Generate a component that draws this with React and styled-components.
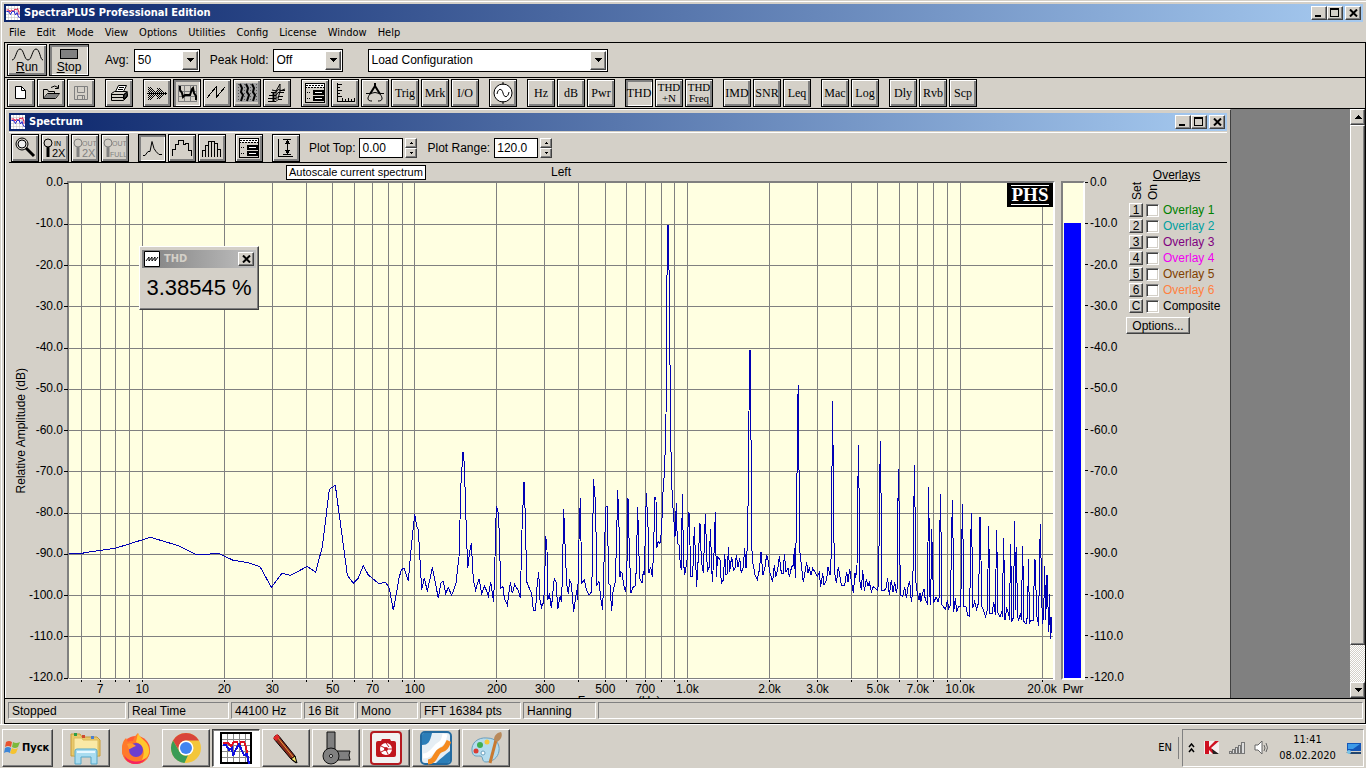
import React from 'react';
import styled, { createGlobalStyle, css } from 'styled-components';

const FACE = '#d4d0c8';
const SHADOW = '#808080';
const DARK = '#404040';
const PLOT = '#ffffe1';
const UI = '"DejaVu Sans Condensed", "Noto Sans", sans-serif';
const ARIAL = '"Liberation Sans", Arial, sans-serif';
const SERIF = '"Liberation Serif", "Times New Roman", serif';

const GlobalStyle = createGlobalStyle`
  * { box-sizing: border-box; }
  body { margin: 0; background: ${FACE}; font: 12px/14px ${ARIAL}; color: #000; }
  button, input, select { font: inherit; color: inherit; margin: 0; padding: 0; border-radius: 0; }
  svg { display: block; flex: none; }
`;

const raised = css`
  background: ${FACE};
  border: 1px solid;
  border-color: #fff ${DARK} ${DARK} #fff;
  box-shadow: inset -1px -1px 0 ${SHADOW};
`;

const Screen = styled.div`
  display: flex;
  flex-direction: column;
  height: 100vh;
  overflow: hidden;
`;

const AppWindow = styled.div`
  flex: 1;
  min-height: 0;
  display: flex;
  flex-direction: column;
  padding: 2px 0 0 2px;
  border-top: 1px solid #fff;
  border-left: 1px solid #fff;
  margin: 1px 0 0 1px;
`;

const TitleBar = styled.header`
  display: flex;
  align-items: center;
  gap: 4px;
  height: 18px;
  padding: 0 2px;
  margin-right: ${p => (p.$main ? '3px' : '0')};
  background: ${p => (p.$idle ? `linear-gradient(90deg, #808080, #c0c0c0)` : 'linear-gradient(90deg, #0a246a, #a6caf0)')};
  color: ${p => (p.$idle ? FACE : '#fff')};
`;

const TitleText = styled.h1`
  flex: 1;
  margin: 0;
  font: bold 11px/16px ${UI};
`;

const Captions = styled.div`
  display: flex;
  button:last-child { margin-left: ${p => (p.$single ? '0' : '2px')}; }
`;

const CaptionButton = styled.button`
  ${raised}
  width: 16px;
  height: 14px;
  display: flex;
  align-items: center;
  justify-content: center;
  color: #000 !important;
`;

const MenuBar = styled.nav`
  display: flex;
  gap: 11px;
  height: 20px;
  padding: 0 5px;
  font: 11px/21px ${UI};
  a { color: inherit; text-decoration: none; }
`;

const Frame = styled.div`
  flex: 1;
  min-height: 0;
  display: flex;
  flex-direction: column;
  border: 1px solid #000;
`;

const Toolbar = styled.div`
  display: flex;
  align-items: center;
  gap: ${p => p.$gap || 10}px;
  height: ${p => p.$height}px;
  padding: 0 2px;
  border-bottom: 1px solid #000;
`;

const Group = styled.div`
  display: flex;
  gap: 2px;
`;

const ToolButton = styled.button`
  display: flex;
  flex-direction: column;
  align-items: center;
  justify-content: center;
  width: ${p => (p.$wide ? 40 : 28)}px;
  height: ${p => (p.$wide ? 32 : 28)}px;
  overflow: hidden;
  white-space: pre;
  text-align: center;
  font: ${p => (p.$wide ? `12px/13px ${ARIAL}` : p.$small ? `11px/11px ${SERIF}` : `12px/14px ${SERIF}`)} !important;
  background: ${FACE};
  color: ${p => (p.$off ? SHADOW : '#000')} !important;
  border: 1px solid #000;
  box-shadow: ${p => (p.$down
    ? `inset 2px 2px 0 ${SHADOW}, inset -1px -1px 0 #fff`
    : `inset 1px 1px 0 #fff, inset -2px -2px 0 ${SHADOW}`)};
`;

const Field = styled.label`
  display: flex;
  align-items: center;
  gap: ${p => p.$gap || 4}px;
  white-space: nowrap;
`;

const Combo = styled.span`
  position: relative;
  display: block;
  width: ${p => p.$width}px;
  height: 23px;
  select {
    appearance: none;
    width: 100%;
    height: 100%;
    padding: 0 22px 0 3px;
    border: 1px solid #000;
    background: #fff;
  }
  i {
    ${raised}
    position: absolute;
    top: 2px;
    right: 2px;
    bottom: 2px;
    width: 16px;
    display: flex;
    align-items: center;
    justify-content: center;
    pointer-events: none;
  }
`;

const NumberBox = styled.input`
  width: 44px;
  height: 20px;
  padding: 0 2px !important;
  border: 1px solid #000;
  background: #fff;
`;

const Spinner = styled.span`
  display: flex;
  flex-direction: column;
  margin-right: 8px;
  button {
    ${raised}
    display: flex;
    align-items: center;
    justify-content: center;
    width: 12px;
    height: 10px;
  }
`;

const Workspace = styled.div`
  flex: 1;
  min-height: 0;
  display: flex;
  background: ${SHADOW};
  overflow: hidden;
`;

const Child = styled.section`
  flex: 1;
  min-width: 0;
  height: calc(100% + 24px);
  display: flex;
  flex-direction: column;
  padding: 3px 3px 2px;
  margin-right: 119px;
  background: ${FACE};
  border: 1px solid;
  border-color: #fff ${DARK} ${DARK} #fff;
`;

const ChildBar = styled(Toolbar)`
  border-top: 1px solid #fff;
  margin-top: 1px;
`;

const Body = styled.div`
  flex: 1;
  min-height: 0;
  display: flex;
`;

const ChartGrid = styled.div`
  flex: 1;
  min-width: 0;
  display: grid;
  grid-template-columns: 19px 36px 3px minmax(0, 1fr) 6px 24px 41px;
  grid-template-rows: 18px minmax(0, 1fr) 39px;
`;

const ChannelName = styled.div`
  grid-column: 4;
  text-align: center;
  line-height: 18px;
`;

const AxisTitle = styled.div`
  grid-row: 2;
  grid-column: 1;
  align-self: center;
  justify-self: end;
  writing-mode: vertical-rl;
  rotate: 180deg;
  white-space: nowrap;
`;

const Scale = styled.div`
  grid-row: 2;
  grid-column: ${p => p.$column};
  display: flex;
  flex-direction: column;
  justify-content: space-between;
  align-items: ${p => (p.$left ? 'flex-start' : 'flex-end')};
  margin: -6px 0 -4px;
  padding: 0 1px 0 0;
  span { display: flex; align-items: center; gap: 2px; }
  span::before {
    content: '';
    display: ${p => (p.$left ? 'block' : 'none')};
    width: 3px;
    height: 1px;
    background: #000;
  }
`;

const PlotFrame = styled.div`
  grid-row: 2;
  grid-column: ${p => p.$column};
  position: relative;
  min-height: 0;
  background: ${PLOT};
  border: 2px solid;
  border-color: ${SHADOW} #fff #fff ${SHADOW};
  svg.plot { width: 100%; height: 100%; overflow: visible; }
`;

const Level = styled.div`
  height: 100%;
  padding: 40px 2px 0 1px;
  &::before { content: ''; display: block; height: 100%; background: #0000ff; }
`;

const FreqAxis = styled.div`
  grid-row: 3;
  grid-column: 4;
  padding: 0 2px;
  svg { width: 100%; height: 36px; overflow: visible; font: 12px ${ARIAL}; }
`;

const MeterName = styled.div`
  grid-row: 3;
  grid-column: 6;
  padding-top: 2px;
  text-align: center;
`;

const Badge = styled.div`
  position: absolute;
  top: 0;
  right: 0;
  width: 46px;
  padding: 2px 4px;
  background: #000;
  color: #fff;
  text-align: center;
  font: bold 19px/18px ${SERIF};
  span { display: block; border: solid #fff; border-width: 1px 0; }
`;

const Floating = styled.div`
  ${raised}
  position: absolute;
  left: 70px;
  top: 63px;
  width: 120px;
  height: 64px;
  padding: 3px 2px;
`;

const Reading = styled.div`
  text-align: center;
  white-space: nowrap;
  font: 22px/40px ${ARIAL};
`;

const Tip = styled.div`
  position: absolute;
  top: 31px;
  left: 14px;
  z-index: 2;
  padding: 0 2px;
  border: 1px solid #000;
  background: #fff;
  font: 11px/13px ${ARIAL};
  white-space: nowrap;
`;

const TipAnchor = styled.div`
  position: relative;
`;

const Overlays = styled.aside`
  display: flex;
  flex-direction: column;
  width: 101px;
  padding-top: 5px;
  white-space: nowrap;
`;

const OverlayHead = styled.a`
  align-self: center;
  color: inherit;
  text-decoration: underline;
`;

const Uprights = styled.div`
  display: flex;
  align-items: flex-end;
  gap: 2px;
  height: 18px;
  padding-left: 4px;
  margin-bottom: 2px;
  span { writing-mode: vertical-rl; rotate: 180deg; line-height: 14px; }
`;

const OverlayRow = styled.div`
  display: flex;
  align-items: center;
  height: 16px;
  padding-left: 3px;
  color: ${p => p.$color};
`;

const SetButton = styled.button`
  ${raised}
  width: 14px;
  height: 14px;
  line-height: 11px !important;
  color: #000 !important;
`;

const Tick = styled.input.attrs({ type: 'checkbox' })`
  appearance: none;
  width: 13px;
  height: 13px;
  margin: 0 3px !important;
  background: #fff;
  border: 1px solid;
  border-color: ${SHADOW} #fff #fff ${SHADOW};
  box-shadow: inset 1px 1px 0 ${DARK}, inset -1px -1px 0 ${FACE};
`;

const Options = styled.button`
  ${raised}
  width: 64px;
  height: 17px;
  line-height: 14px !important;
  margin: 3px 0 0 !important;
`;

const Scrollbar = styled.div`
  display: flex;
  flex-direction: column;
  width: 15px;
  background: repeating-conic-gradient(#fff 0 25%, ${FACE} 0 50%) 0 0 / 2px 2px;
  button {
    ${raised}
    display: flex;
    align-items: center;
    justify-content: center;
    height: 16px;
    width: 15px;
  }
`;

const Thumb = styled.div`
  ${raised}
  flex: 520;
`;

const Track = styled.div`
  flex: 37;
`;

const StatusBar = styled.footer`
  display: flex;
  gap: 2px;
  height: 25px;
  padding: 3px 2px 4px 3px;
  border-top: 1px solid #000;
`;

const Panel = styled.div`
  ${p => (p.$width ? `width: ${p.$width}px;` : 'flex: 1;')}
  padding-left: 3px;
  border: 1px solid;
  border-color: ${SHADOW} #fff #fff ${SHADOW};
  line-height: 16px;
`;

const Taskbar = styled.div`
  display: flex;
  align-items: center;
  height: 44px;
  padding: 2px 2px 0;
  border-top: 1px solid #fff;
`;

const Start = styled.button`
  ${raised}
  display: flex;
  align-items: center;
  gap: 1px;
  width: 51px;
  height: 38px;
  padding-left: 1px !important;
  margin-right: 9px !important;
  font: bold 11px/14px ${UI} !important;
`;

const TaskList = styled.div`
  flex: 1;
  display: flex;
  gap: 2px;
`;

const Task = styled.button`
  ${raised}
  display: flex;
  align-items: center;
  justify-content: center;
  width: 48px;
  height: 38px;
  ${p => p.$flat && 'border-color: transparent; box-shadow: none;'}
  ${p => p.$active && `background: #fff; border-color: ${DARK} #fff #fff ${DARK}; box-shadow: inset 1px 1px 0 ${SHADOW};`}
`;

const Language = styled.span`
  padding-right: 6px;
  margin-right: 3px;
  border-right: 1px solid ${SHADOW};
  font: 11px/22px ${UI};
`;

const Tray = styled.div`
  display: flex;
  align-items: center;
  gap: 9px;
  width: 182px;
  height: 38px;
  padding: 0 2px 0 5px;
  border: 1px solid;
  border-color: ${SHADOW} #fff #fff ${SHADOW};
`;

const Clock = styled.time`
  flex: 1;
  display: flex;
  flex-direction: column;
  align-items: center;
  min-width: 0;
  font: 11px/16px ${UI};
`;

/* ---- spectrum data: three units to a pixel of the nominal plot ---- */

const SEGMENTS = [
  [-27, 711, '24,400 66,400 80,397 165,385 245,360 272,352 355,377 410,405 475,400 520,421 565,428 600,440 634,502 666,460 692,466 742,439 767,457 787,380 808,208 826,196 862,466 880,490 895,474 910,437 925,465 955,490 978,488 988,505 1000,571 1018,470'],
  [933, 771, '65,388 72,385 85,423 93,330 104,223 110,258 115,270 125,450 133,413 142,455 157,382 175,475 183,428 190,424 197,460 205,443 215,466 228,430 237,350 240,240 243,130 249,35 253,70 257,210 263,385 269,335 274,310 280,420 287,450 297,416 305,460 314,438 325,467 332,425 341,487 345,350 349,197 354,215 358,280 362,445 369,440 373,475 382,495 391,427 397,460 404,434 415,452 421,475 426,270 432,125 436,230 440,425 448,445 455,460 460,511 467,511 470,450 476,395 480,480 485,502 491,485 494,430 497,287 501,330 503,480 508,460 514,505 523,413 529,430 533,508 541,467 544,487 547,420 551,208 556,335 560,430 565,463 569,422 574,430 581,515 590,450 593,480 597,300 601,175 605,430 613,420 618,445 627,466 635,455 638,330 640,118 647,190 650,435 657,425 663,480 668,510 673,330 678,200 682,200 686,430 690,435 695,513 699,455 705,430 709,330 713,150 717,260 720,410 722,395 727,400 730,430 736,455 740,430 744,175 748,330 753,460 760,440 767,437 770,330 773,202 779,415 786,430 790,395 793,400 799,160 804,260 807,400 812,380 817,412 821,330 824,170 828,180 830,325 834,305 840,310'],
  [1713, 51, '65,990 68,890 74,805 78,650 80,310 83,75 85,75 88,275 91,600 94,830 98,910 103,980 105,1010 109,910 112,1030 117,1035 121,1095 124,1110 127,882 131,1090 134,1125 142,1075 145,937 148,940 152,1130 158,1130 163,980 166,1060 170,1160 175,1070 180,970 184,1080 190,1120 196,943 202,1115 208,1100 211,988 217,1147 222,1060 226,935 229,1130 233,1070 240,1080 244,1150 250,1140 254,1062 258,1125 262,1120 265,1042 269,1115 275,1070 280,1110 285,1105 289,1065 294,1100 299,1075 304,1120 310,1100 314,1045 318,1105 323,1020 326,730 329,450 331,450 333,720 335,1035 338,1085 345,1125 352,1138 358,1110 363,1057 369,1125 375,1100 380,1065 385,1085 389,1115 398,1145 403,1095 407,1130 413,1110 418,1068 424,1120 430,1120 433,1062 438,1115 444,1105 448,1130 455,1100 460,1095 463,1045 466,1135 470,930 473,615 475,555 477,810 480,1060 484,1095 490,1147 500,1085 504,1120 508,1105 513,1125 518,1105 524,1115 532,1130 538,1118 542,1160 548,1120 552,1155 560,1140 564,1100 570,1125 574,1060 576,800 578,603 580,860 583,1110 589,1150 595,1100 599,1125 604,1155 614,1155 620,1115 624,1145 629,1107 635,1150 640,1178 645,1120'],
  [2313, 711, '47,475 51,435 53,275 55,75 58,265 60,485 64,510 68,450 73,512 79,478 84,498 88,487 94,515 100,500 106,505 112,510 116,490 118,280 121,63 124,290 126,512 134,510 138,505 143,475 148,525 154,480 159,515 164,485 169,520 172,500 173,330 175,147 179,335 181,525 188,530 194,500 199,535 204,500 209,482 214,545 218,520 221,330 223,135 226,320 228,490 232,520 237,540 240,520 242,547 248,520 252,508 256,540 262,550 264,370 266,202 268,375 270,530 271,555 274,440 275,328 278,440 281,550 288,530 294,545 298,530 299,390 301,222 304,390 306,555 312,562 317,568 322,540 326,565 331,555 334,400 337,240 340,405 341,575 346,535 350,575 356,560 362,560 365,408 367,252 370,408 372,560 378,560 383,585 389,590 391,430 394,280 397,430 398,565 404,545 410,568 415,550 418,420 420,290 423,420 426,560 432,575 437,590 442,570 444,450 446,318 448,450 450,580 457,580 461,545 466,585 468,450 470,331 472,460 474,580 480,590 485,575 488,590 489,460 491,355 493,480 495,600 500,565 506,580 509,600 510,490 512,373 514,500 515,607 521,590 522,440 524,303 527,570 528,450 530,382 532,590 536,600 541,580 545,600 546,480 548,378 550,490 552,605 558,612 563,585 564,500 566,418 568,610 574,600 580,600 582,500 585,418 588,510 591,590 596,617 598,450 601,312 604,460 607,612 611,590 614,437 617,600 619,540 621,465 624,560 626,637 628,523 631,658 633,590 635,640 635,600'],
];

const TRACE = SEGMENTS.map(([dx, dy, pts]) =>
  pts.split(' ').map(p => {
    const [x, y] = p.split(',').map(Number);
    return `${x + dx},${y + dy}`;
  }).join(' ')
).join(' ');

const LOG_MIN = Math.log10(5.385);
const LOG_SPAN = 3.61;
const freqX = f => `${((Math.log10(f) - LOG_MIN) / LOG_SPAN) * 100}%`;

const FREQS = [10, 100, 1000, 10000]
  .flatMap(d => [1, 2, 3, 4, 5, 6, 7, 8, 9].map(n => n * d))
  .filter(f => f <= 20000);
const ALL_FREQS = [6, 7, 8, 9, ...FREQS];
const FREQ_LABELS = [7, 10, 20, 30, 50, 70, 100, 200, 300, 500, 700, 1000, 2000, 3000, 5000, 7000, 10000, 20000];
const LEVELS = Array.from({ length: 13 }, (_, i) => i * -10);
const freqName = f => (f >= 1000 ? `${(f / 1000).toFixed(1)}k` : f);

function SpectrumPlot() {
  return (
    <svg className="plot" shapeRendering="crispEdges" role="img" aria-label="Spectrum">
      {ALL_FREQS.map(f => <line key={f} x1={freqX(f)} x2={freqX(f)} y1="0" y2="100%" stroke="#808080" />)}
      {LEVELS.map(l => {
        const y = `${(-l / 120) * 100}%`;
        return (
          <g key={l}>
            {l < 0 && <line x1="0" x2="100%" y1={y} y2={y} stroke="#808080" />}
            <line x1="-5" x2="-1" y1={y} y2={y} stroke="#000" />
          </g>
        );
      })}
      <svg width="100%" height="100%" viewBox="0 0 2952 1485" preserveAspectRatio="none">
        <polyline points={TRACE} fill="none" stroke="#0000b4" strokeWidth="1" vectorEffect="non-scaling-stroke" />
      </svg>
    </svg>
  );
}

/* ---- icons ---- */

const Ico = ({ children, w = 22, h = 22, ...rest }) => (
  <svg width={w} height={h} viewBox={`0 0 ${w} ${h}`} fill="none" stroke="currentColor" shapeRendering="crispEdges" aria-hidden="true" {...rest}>
    {children}
  </svg>
);

const Down = () => <Ico w={8} h={4} stroke="none"><path d="M0 0h8L4 4z" fill="#000" /></Ico>;
const Up = () => <Ico w={8} h={4} stroke="none"><path d="M0 4h8L4 0z" fill="#000" /></Ico>;
const TinyUp = () => <Ico w={4} h={2} stroke="none"><path d="M0 2h4L2 0z" fill="#000" /></Ico>;
const TinyDown = () => <Ico w={4} h={2} stroke="none"><path d="M0 0h4L2 2z" fill="#000" /></Ico>;

const GraphIcon = () => (
  <svg width="14" height="14" viewBox="0 0 28 28" aria-hidden="true">
    <path fill="#fff" d="M0 0h28v28H0z" />
    <path d="M5 0v28M11 0v28M17 0v28M23 0v28M0 5h28M0 11h28M0 17h28M0 23h28" stroke="#bbb" />
    <path d="M1 8h5l2 4 3-4 4 3 3-5 3 2 2-3 3 8v4" stroke="#e01040" strokeWidth="2" fill="none" />
    <path d="M1 11h4l4 6 3-6 4-1 3 8 3-5 2 6 3 5" stroke="#2020d0" strokeWidth="2" fill="none" />
  </svg>
);

/* dithered envelope: column heights of two decaying bursts */
const BURST = [7, 6, 6, 5, 4, 4, 3, 2, 2, 6, 5, 5, 4, 3, 3, 2, 1, 1];

const ICONS = {
  file: <Ico shapeRendering="auto"><path d="M5.500 4.500h6l4 4v8h-10z" fill="#fff" /><path d="M11.500 4.500v4h4" /></Ico>,
  open: <Ico shapeRendering="auto"><path d="M3.500 16.500v-9h4l1 2h6v2M3.500 16.500l4-5h12l-4 5z" /><path d="M4 16l4-4h11l-4 4z" fill="#808080" stroke="none" /><path d="M11 5.500q4-3 7 0M18.500 3v3.500H15" /></Ico>,
  save: <Ico shapeRendering="auto"><path d="M4.500 4.500h13v13h-13zM7.500 4.500v6h7v-6M7.500 17.500v-4h7v4M12.500 14v3" /></Ico>,
  print: <Ico shapeRendering="auto"><path d="M7.500 9.500l3-6h8l-3 6z" fill="#fff" /><path d="M11 5.500h5M10 7.500h5" /><path d="M3.500 11.500l3-2h12l1 2v3l-4 4h-12z" fill={FACE} /><path d="M3.500 12.500h12l4-3M15.500 12.500v5M4 15.500h11" /><path d="M16 13l3-3v4l-3 3z" fill="#444" /></Ico>,
  wave: <Ico>{BURST.map((n, i) => <path key={i} d={`M${i + 2.5} ${11 - n}v${n * 2 + 1}`} strokeDasharray="1 1" strokeDashoffset={(i + n) % 2} />)}<path d="M1 11.500h20" /></Ico>,
  spectrum: <Ico><path d="M2.500 3v17M8.500 3v17M14.500 3v17M20.500 3v17M2 3.500h19M2 9.500h19M2 14.500h19M2 19.500h19" stroke="#808080" /><path d="M4 4v4l2 3 1 4 2-2h5l2-6 1-1 1 5 2 3v4" strokeWidth="2" shapeRendering="auto" /></Ico>,
  phase: <Ico><path d="M1 16l9-11v11l9-11" /></Ico>,
  gram: <Ico shapeRendering="auto"><path d="M0 1h22v19H0z" fill="#a4a4a4" stroke="none" /><path d="M4 2l2 4-1 4 2 3-2 6M10 2l2 4-1 4 2 3-2 6M16 2l2 4-1 4 2 3-2 6" strokeWidth="2" /><path d="M2.500 2v18M8.500 2v18M14.500 2v18M20.500 2v18" strokeDasharray="1 2" stroke="#555" /></Ico>,
  surface: <Ico shapeRendering="auto"><path d="M2 19.500h8l2-2h4M2 16.500h8l2-2h5M3 13.500h7l2-3h6M5 10.500h5l2-3 3 1h4M6 8l4 1 4-7v7l5-2M10 8v10M14 9l-2 8" /><path d="M7.500 11v8" strokeWidth="2" /></Ico>,
  panel: <Ico><path d="M1.500 1.500h19v19h-19z" fill={FACE} /><path d="M2 2h18v3H2z" fill="#fff" stroke="none" /><path d="M2 3.500h14M17 3.500h3M1 5.500h20" strokeDasharray="2 1" /><path d="M9.500 8.500h9v3h-9zM9.500 14.500h9v3h-9z" fill="#fff" strokeWidth="2" /><path d="M3 10.500h4M3 16.500h4" strokeDasharray="1 1" /></Ico>,
  ruler: <Ico><path d="M3.500 1v18M3 19.500h18M4 2.500h4M4 5.500h2M4 8.500h4M4 11.500h2M4 14.500h4M8.500 19v-3M11.500 19v-2M14.500 19v-3M17.500 19v-2M20.500 19v-3" /></Ico>,
  compass: <Ico shapeRendering="auto"><path d="M11 1v4M11 4L6 12M11 4l5 8" strokeWidth="2" /><path d="M2 11.500h4q5-2 10 0h4M6 12c-3 4-3 7 2 7M16 12c3 4 3 7-2 7" /></Ico>,
  sine: <Ico shapeRendering="auto"><circle cx="11" cy="11" r="9" fill="#fff" /><path d="M5 12c1-6 5-6 6-1s5 5 6-1M11 0v3M11 19v3" /></Ico>,
  zoom: <Ico shapeRendering="auto"><circle cx="8" cy="7" r="6" /><circle cx="8" cy="7" r="4" fill="#eee" /><path d="M12 11l8 8" strokeWidth="3" /></Ico>,
  peak: <Ico shapeRendering="auto"><path d="M2 18.500h2l3-4h2l2-10 2 7 2 3 3 3h3" /></Ico>,
  steps: <Ico><path d="M1.500 19v-7h3V7h3V3h5v4h2v-1h3v7h3v6" /></Ico>,
  bars: <Ico><path d="M1.500 20v-7h3v7M4.500 20V8h3v12M7.500 20V4h3v16M10.500 20V4h3v16M13.500 20V6h3v14M16.500 20v-8h3v8" /></Ico>,
  autoscale: <Ico><path d="M3.500 2v18M3 19.500h15M8 2.500h8M12.500 3v14M8 17.500h8" /><path d="M12.500 3l3 4h-6zM12.500 17l3-4h-6z" fill="#000" stroke="none" /></Ico>,
  monitor: <Ico w={15} h={14} shapeRendering="auto" stroke="none"><path d="M1 2h14v8H1z" fill="#1456b8" /><path d="M2 3h12L7 8H2z" fill="#3d9be8" /><path d="M0 11h15v2H4z" fill="#23466e" /><circle cx="3" cy="11" r="2" fill="#7ac5e8" /></Ico>,
};

const LensText = styled.text`
  font: ${p => p.$size}px ${ARIAL};
  stroke: none;
  fill: currentColor;
`;

const Lens = ({ top, bottom }) => (
  <Ico w={26} h={22} shapeRendering="auto">
    <circle cx="6" cy="6" r="4" />
    <path d="M6 10v10" strokeWidth="3" />
    <LensText x={top.length > 2 ? 10 : 12} y="9" $size={7}>{top}</LensText>
    <LensText x={bottom.length > 2 ? 8 : 10} y="20" $size={bottom.length > 2 ? 7 : 11}>{bottom}</LensText>
  </Ico>
);

const TASK_ICONS = [
  ['Explorer', (
    <svg width="34" height="34" viewBox="0 0 34 34">
      <path d="M2 3h9l2 3h15l3 3v16H2z" fill="#e9c96a" stroke="#c79b38" />
      <path d="M5 7h8l1 2h15v16H5z" fill="#fae9a6" stroke="#dab95d" />
      <path d="M5 2h3v3H5z" fill="#2b9d48" /><path d="M13 4h3v3h-3z" fill="#cf4a30" /><path d="M22 5h3v3h-3z" fill="#4a7fd0" />
      <path d="M6 33V20q0-2 2-2h18q2 0 2 2v13h-6v-7H12v7z" fill="#a9dcf0" stroke="#55a7c8" />
      <path d="M8 21h18" stroke="#e8f8ff" strokeWidth="2" />
    </svg>)],
  ['Firefox', (
    <svg width="34" height="34" viewBox="0 0 34 34">
      <circle cx="17" cy="19" r="14" fill="#ff5a36" />
      <path d="M3 19c0-6 1-9 4-12l2 4q3-2 5-1c1-4 3-6 5-8 1 5 9 7 11 15 3 8-4 16-13 16S3 27 3 19" fill="#ff7a2b" />
      <path d="M19 2c1 5 10 8 11 16 1 6-3 10-7 11 4-9 1-15-6-18z" fill="#ffc72e" />
      <path d="M5 24c4 7 16 9 22 3-4 8-19 9-22-3" fill="#f5235f" />
      <circle cx="17" cy="19" r="7" fill="#6e3ed0" />
      <path d="M8 13c4-2 7 0 9 2-4 1-5 3-7 3z" fill="#ff9a30" />
    </svg>)],
  ['Chrome', (
    <svg width="32" height="32" viewBox="0 0 32 32">
      <circle cx="16" cy="16" r="15" fill="#f3c63a" />
      <path d="M3 8.500A15 15 0 0 1 29 8.500H16a7.500 7.500 0 0 0-6.500 11z" fill="#d9453a" />
      <path d="M3 8.500l6.500 11.200A7.500 7.500 0 0 0 18 23.300L14.500 31A15 15 0 0 1 3 8.500" fill="#3a9c56" />
      <circle cx="16" cy="16" r="7.500" fill="#fff" /><circle cx="16" cy="16" r="6" fill="#4284f0" />
    </svg>)],
  ['SpectraPLUS', (
    <svg width="32" height="32" viewBox="0 0 32 32" shapeRendering="crispEdges">
      <path d="M1 1h30v30H1z" fill="#fff" stroke="#000" strokeWidth="2" />
      <path d="M7 2v28M13 2v28M19 2v28M25 2v28M2 7h28M2 13h28M2 19h28M2 25h28" stroke="#888" />
      <path d="M3 11h5l3 3 3-4h3l2 4 2-4 3 0 2 5 1 6" stroke="#e01020" strokeWidth="2" fill="none" />
      <path d="M3 13h3l3 5 3-2 1 8 2-5 4-7 3 7 2 4 3-1 2 10" stroke="#1010e0" strokeWidth="2" fill="none" />
    </svg>)],
  ['Pencil', (
    <svg width="32" height="34" viewBox="0 0 32 34">
      <path d="M5 5l3-1 17 21 1 7-5-4L4 8z" fill="#8c2a1c" stroke="#000" />
      <path d="M8 7l15 19" stroke="#e9a13b" />
      <path d="M3 7l4-4 3 3-4 4z" fill="#e02828" /><path d="M21 28l4-3 2 7z" fill="#f5e36b" stroke="#000" />
    </svg>)],
  ['Hinge', (
    <svg width="34" height="34" viewBox="0 0 34 34">
      <path d="M8 1h8v17H8zM14 20h17l-1 4 1 5H14z" fill="#808080" stroke="#111" />
      <circle cx="12" cy="25" r="8" fill="#808080" stroke="#111" /><circle cx="12" cy="25" r="1.500" fill="#fff" stroke="#111" />
    </svg>)],
  ['Camera', (
    <svg width="34" height="34" viewBox="0 0 34 34">
      <rect x="2" y="1" width="30" height="32" rx="3" fill="#f2f2f2" stroke="#b41a20" strokeWidth="2" />
      <path d="M7 12q0-2 2-2h3l1-2h8l1 2h3q2 0 2 2v12q0 2-2 2H9q-2 0-2-2z" fill="#c0161d" />
      <circle cx="17" cy="18" r="6" fill="#fff" /><circle cx="17" cy="18" r="2" fill="#c0161d" />
      <path d="M17 12l3 4M23 18h-5M19 23l-2-4M12 21l4-2M12 15l4 2" stroke="#c0161d" />
    </svg>)],
  ['Viewer', (
    <svg width="34" height="34" viewBox="0 0 34 34">
      <rect x="2" y="1" width="30" height="32" rx="4" fill="#e6eef4" stroke="#246a9f" strokeWidth="2" />
      <path d="M3 14c6 0 8-3 10-12H5q-2 0-2 2z" fill="#2c7eb8" /><path d="M4 25c9 0 11-9 17-12 4-2 4-6 5-10" stroke="#fff" strokeWidth="5" fill="none" />
      <path d="M9 31c8 0 7-10 13-12 5-1 6-5 8-9" stroke="#f58a1f" strokeWidth="5" fill="none" />
      <path d="M31 20v10q0 2-2 2H17c5-5 9-8 14-12" fill="#2c7eb8" />
    </svg>)],
  ['Paint', (
    <svg width="34" height="34" viewBox="0 0 34 34">
      <path d="M3 20C2 12 9 6 18 7c9 0 13 6 12 13s-7 11-13 11c-5 0-2-6-6-6s-7 1-8-5" fill="#b5dcee" stroke="#6a9fbd" />
      <circle cx="11" cy="14" r="3" fill="#3fae52" /><circle cx="18" cy="11" r="2.500" fill="#f5c83a" /><circle cx="7" cy="20" r="2.500" fill="#d93d34" /><circle cx="14" cy="22" r="2" fill="#fff" stroke="#6a9fbd" />
      <path d="M27 9l-6 23" stroke="#c87a32" strokeWidth="3" /><path d="M25 9c0-4 2-7 7-8 2 3 0 8-4 10z" fill="#b98a5b" />
    </svg>)],
];

const Buttons = ({ items }) => (
  <Group>
    {items.map(b => {
      const [name, opts = {}] = Array.isArray(b) ? b : [b];
      return (
        <ToolButton key={name} $down={opts.down} $off={opts.off} $small={opts.small} aria-label={opts.label || name}>
          {opts.content || ICONS[name] || name}
        </ToolButton>
      );
    })}
  </Group>
);

const WindowButtons = ({ single }) => (
  <Captions $single={single}>
    {!single && <CaptionButton aria-label="Minimize"><Ico w={10} h={10}><path d="M1 8h6" strokeWidth="2" /></Ico></CaptionButton>}
    {!single && <CaptionButton aria-label="Maximize"><Ico w={10} h={10}><path d="M0 1h9" strokeWidth="2" /><path d="M.5 1.500h8v7h-8z" /></Ico></CaptionButton>}
    <CaptionButton aria-label="Close"><Ico w={9} h={8} shapeRendering="auto"><path d="M1 .5l7 7M8 .5l-7 7" strokeWidth="2" /></Ico></CaptionButton>
  </Captions>
);

const Choice = ({ label, value, width }) => (
  <Combo $width={width}>
    <select aria-label={label} defaultValue={value}><option>{value}</option></select>
    <i><Down /></i>
  </Combo>
);

const Spin = ({ label, value }) => (
  <Group>
    <Field>{label}<NumberBox defaultValue={value} /></Field>
    <Spinner>
      <button aria-label={`${label} up`}><TinyUp /></button>
      <button aria-label={`${label} down`}><TinyDown /></button>
    </Spinner>
  </Group>
);

const ComboRow = styled(Group)`
  gap: 10px;
  margin-left: 6px;
  > :last-child { margin-left: 15px; }
`;

const OVERLAYS = [
  ['1', 'Overlay 1', '#008000'], ['2', 'Overlay 2', '#00a0a0'], ['3', 'Overlay 3', '#800080'],
  ['4', 'Overlay 4', '#f000f0'], ['5', 'Overlay 5', '#804000'], ['6', 'Overlay 6', '#ff8040'], ['C', 'Composite', '#000'],
];

const STATUS = [['Stopped', 118], ['Real Time', 101], ['44100 Hz', 71], ['16 Bit', 51], ['Mono', 61], ['FFT 16384 pts', 101], ['Hanning', 73], ['', 0]];

const MENUS = ['File', 'Edit', 'Mode', 'View', 'Options', 'Utilities', 'Config', 'License', 'Window', 'Help'];

const scaleLabels = LEVELS.map(l => <span key={l}>{l === 0 ? '0.0' : l.toFixed(1)}</span>);

export default function App() {
  return (
    <Screen>
      <GlobalStyle />
      <AppWindow>
        <TitleBar $main>
          <GraphIcon />
          <TitleText>SpectraPLUS Professional Edition</TitleText>
          <WindowButtons />
        </TitleBar>
        <MenuBar>{MENUS.map(m => <a key={m} href="#menu">{m}</a>)}</MenuBar>
        <Frame>
          <Toolbar $height={35}>
            <Group>
              <ToolButton $wide>
                <Ico w={34} h={15} shapeRendering="auto"><path d="M2 14c4 0 4-11 8-11s4 11 8 11 4-11 8-11 4 11 7 11" /></Ico>
                <span><u>R</u>un</span>
              </ToolButton>
              <ToolButton $wide $down>
                <Ico w={20} h={14}><path d="M1.500 2.500h17v9h-17z" fill="#808080" /></Ico>
                <span><u>S</u>top</span>
              </ToolButton>
            </Group>
            <ComboRow>
              <Field $gap={5}>Avg:<Choice label="Average" value="50" width={66} /></Field>
              <Field>Peak Hold:<Choice label="Peak hold" value="Off" width={70} /></Field>
              <Choice label="Configuration" value="Load Configuration" width={240} />
            </ComboRow>
          </Toolbar>
          <Toolbar $height={31}>
            <Buttons items={['file', 'open', ['save', { off: true }]]} />
            <Buttons items={['print']} />
            <Buttons items={['wave', ['spectrum', { down: true }], 'phase', 'gram', 'surface']} />
            <Buttons items={['panel', 'ruler', 'compass', 'Trig', 'Mrk', 'I/O']} />
            <Buttons items={['sine']} />
            <Buttons items={['Hz', 'dB', 'Pwr']} />
            <Buttons items={[['THD', { down: true }], ['THD\n+N', { small: true }], ['THD\nFreq', { small: true }]]} />
            <Buttons items={['IMD', 'SNR', 'Leq']} />
            <Buttons items={['Mac', 'Log']} />
            <Buttons items={['Dly', 'Rvb', 'Scp']} />
          </Toolbar>
          <Workspace>
            <Child>
              <TitleBar>
                <GraphIcon />
                <TitleText as="h2">Spectrum</TitleText>
                <WindowButtons />
              </TitleBar>
              <ChildBar $height={31} $gap={9}>
                <Buttons items={[
                  'zoom',
                  ['in', { content: <Lens top="IN" bottom="2X" /> }],
                  ['out', { off: true, content: <Lens top="OUT" bottom="2X" /> }],
                  ['full', { off: true, content: <Lens top="OUT" bottom="FULL" /> }],
                ]} />
                <Buttons items={[['peak', { down: true }], 'steps', 'bars']} />
                <Buttons items={['panel']} />
                <TipAnchor>
                  <Buttons items={['autoscale']} />
                  <Tip role="tooltip">Autoscale current spectrum</Tip>
                </TipAnchor>
                <Group>
                  <Spin label="Plot Top:" value="0.00" />
                  <Spin label="Plot Range:" value="120.0" />
                </Group>
              </ChildBar>
              <Body>
                <ChartGrid>
                  <ChannelName>Left</ChannelName>
                  <AxisTitle>Relative Amplitude (dB)</AxisTitle>
                  <Scale $column={2}>{scaleLabels}</Scale>
                  <PlotFrame $column={4}>
                    <SpectrumPlot />
                    <Badge><span>PHS</span></Badge>
                    <Floating>
                      <TitleBar $idle>
                        <Ico w={16} h={16} shapeRendering="auto" stroke="#000"><path d="M.5.5h15v15H.5z" fill="#fff" /><path d="M2 10l3-4v4l3-4v4l3-4v4l3-4" /></Ico>
                        <TitleText as="h2">THD</TitleText>
                        <WindowButtons single />
                      </TitleBar>
                      <Reading>3.38545 %</Reading>
                    </Floating>
                  </PlotFrame>
                  <FreqAxis>
                    <svg>
                      {ALL_FREQS.map(f => <line key={f} x1={freqX(f)} x2={freqX(f)} y1="-1" y2="2" stroke="#000" shapeRendering="crispEdges" />)}
                      {FREQ_LABELS.map(f => <text key={f} x={freqX(f)} y="13" textAnchor="middle">{freqName(f)}</text>)}
                      <text x="51.7%" y="25">Frequency (Hz)</text>
                    </svg>
                  </FreqAxis>
                  <PlotFrame $column={6}><Level /></PlotFrame>
                  <Scale $column={7} $left>{scaleLabels}</Scale>
                  <MeterName>Pwr</MeterName>
                </ChartGrid>
                <Overlays>
                  <OverlayHead href="#overlays">Overlays</OverlayHead>
                  <Uprights><span>Set</span><span>On</span></Uprights>
                  {OVERLAYS.map(([key, name, color]) => (
                    <OverlayRow key={key} $color={color}>
                      <SetButton aria-label={`Set ${name}`}>{key}</SetButton>
                      <Field $gap={1}><Tick />{name}</Field>
                    </OverlayRow>
                  ))}
                  <Options>Options...</Options>
                </Overlays>
              </Body>
            </Child>
            <Scrollbar>
              <button aria-label="Scroll up"><Up /></button>
              <Thumb />
              <Track />
              <button aria-label="Scroll down"><Down /></button>
            </Scrollbar>
          </Workspace>
          <StatusBar>{STATUS.map(([t, w]) => <Panel key={t} $width={w}>{t}</Panel>)}</StatusBar>
        </Frame>
      </AppWindow>
      <Taskbar>
        <Start>
          <svg width="17" height="17" viewBox="0 0 17 17" aria-hidden="true">
            <path d="M2 3q3-2 6 0L7 8Q4 6 1 8z" fill="#e8532f" /><path d="M9 3q3 2 7 0l-2 5q-3 2-6 0z" fill="#7cb93c" />
            <path d="M1 9q3-2 6 0l-1 5q-3-2-6 0z" fill="#3d86d8" /><path d="M8 9q3 2 6 0l-2 5q-3 2-6 0z" fill="#f5c330" />
          </svg>
          Пуск
        </Start>
        <TaskList>
          {TASK_ICONS.map(([name, icon]) => (
            <Task key={name} aria-label={name} $flat={name === 'Firefox'} $active={name === 'SpectraPLUS'}>{icon}</Task>
          ))}
        </TaskList>
        <Language>EN</Language>
        <Tray>
          <Ico w={7} h={10} shapeRendering="auto"><path d="M1 4l2.500-3L6 4M1 9l2.500-3L6 9" strokeWidth="1.500" /></Ico>
          <Ico w={15} h={15} stroke="none" shapeRendering="auto"><path d="M0 1h15v13H0z" fill="#f4eeee" /><path d="M1 1h4v6l6-6h4L7 8l7 6H9L5 10v4H1z" fill="#cf1020" /><path d="M8 9l7 5H9z" fill="#222" /></Ico>
          <Ico w={17} h={13}><path d="M1 10h2v2H1zM4 8h2v4H4zM7 6h2v6H7zM10 4h2v8h-2zM13 1h3v11h-3z" fill="#ddd" stroke="#777" /></Ico>
          <Ico w={15} h={15} shapeRendering="auto" stroke="#666"><path d="M1 5h3l4-4v13l-4-4H1z" fill="#fff" /><path d="M10 5q2 3 0 6M12 3q3 5 0 9" /></Ico>
          <Clock><span>11:41</span><span>08.02.2020</span></Clock>
          {ICONS.monitor}
        </Tray>
      </Taskbar>
    </Screen>
  );
}
